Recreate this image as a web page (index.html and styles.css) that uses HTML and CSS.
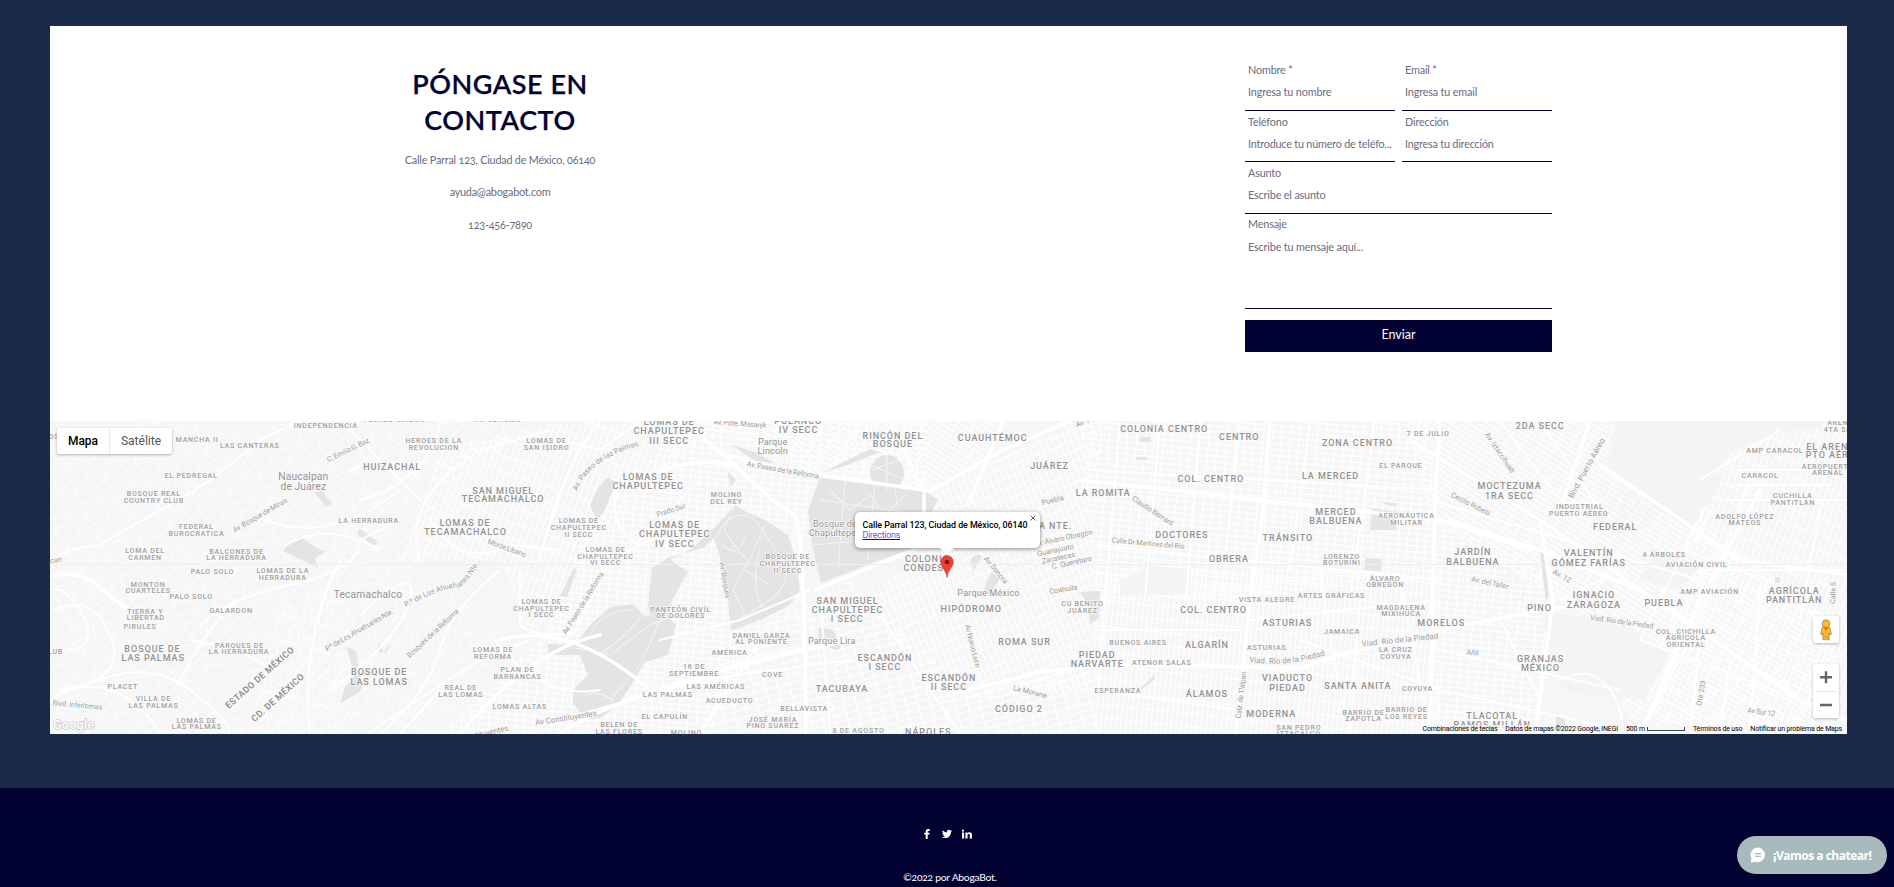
FILE: index.html
```html
<!DOCTYPE html>
<html lang="es">
<head>
<meta charset="utf-8">
<title>AbogaBot - Contacto</title>
<link rel="stylesheet" href="styles.css">
</head>
<body>
<main class="page">
  <section class="contact">
    <div class="contact-info">
      <h1 class="title">PÓNGASE EN<br>CONTACTO</h1>
      <p class="info address">Calle Parral 123, Ciudad de México, 06140</p>
      <p class="info mail">ayuda@abogabot.com</p>
      <p class="info phone">123-456-7890</p>
    </div>
    <form class="form">
      <div class="row">
        <div class="field"><span class="label">Nombre *</span><span class="hint">Ingresa tu nombre</span></div>
        <div class="field"><span class="label">Email *</span><span class="hint">Ingresa tu email</span></div>
      </div>
      <div class="row second">
        <div class="field"><span class="label">Teléfono</span><span class="hint">Introduce tu número de teléfo...</span></div>
        <div class="field"><span class="label">Dirección</span><span class="hint">Ingresa tu dirección</span></div>
      </div>
      <div class="field third"><span class="label">Asunto</span><span class="hint">Escribe el asunto</span></div>
      <div class="field message"><span class="label">Mensaje</span><span class="hint">Escribe tu mensaje aquí...</span></div>
      <button class="send" type="button">Enviar</button>
    </form>
  </section>

  <section class="map">
    <svg class="map-canvas" viewBox="50 421 1797 313" width="1797" height="313">
      <defs>
        <pattern id="g1" width="9" height="6" patternUnits="userSpaceOnUse" patternTransform="rotate(5)"><path class="st" d="M0 .5H9M.5 0V6"/></pattern>
        <pattern id="g2" width="6" height="10" patternUnits="userSpaceOnUse" patternTransform="rotate(-22)"><path class="st" d="M0 .5H6M.5 0V10"/></pattern>
        <pattern id="g3" width="14" height="5" patternUnits="userSpaceOnUse" patternTransform="rotate(32)"><path class="st" d="M0 .5H14M.5 0V5"/></pattern>
        <pattern id="g4" width="5" height="13" patternUnits="userSpaceOnUse" patternTransform="rotate(6)"><path class="st" d="M0 .5H5M.5 0V13"/></pattern>
        <pattern id="g5" width="12" height="7" patternUnits="userSpaceOnUse" patternTransform="rotate(-14)"><path class="st" d="M0 .5H12M.5 0V7"/></pattern>
        <pattern id="g6" width="6" height="15" patternUnits="userSpaceOnUse" patternTransform="rotate(20)"><path class="st" d="M0 .5H6M.5 0V15"/></pattern>
        <pattern id="w1" width="34" height="24" patternUnits="userSpaceOnUse" patternTransform="rotate(-28)"><path class="st soft" d="M0 4Q8 0 17 4T34 4M0 11Q8 16 17 11T34 11M0 18Q8 13 17 18T34 18M6 0Q10 7 6 13T6 24M25 0Q20 8 25 12T25 24"/></pattern>
        <pattern id="w2" width="22" height="26" patternUnits="userSpaceOnUse" patternTransform="rotate(14)"><path class="st soft" d="M4 0Q8 7 4 13T4 26M10 0Q15 7 10 13T10 26M17 0Q13 7 17 13T17 26M0 8H22"/></pattern>
      </defs>
      <rect class="land" x="50" y="421" width="1797" height="313"/>
      <rect fill="url(#w1)" x="50" y="421" width="300" height="313"/>
      <path fill="url(#w2)" d="M280 600L430 570L500 640L480 734H250Z"/>
      <path fill="url(#w1)" d="M350 421H520L430 560L350 600Z"/>
      <path fill="url(#g6)" d="M440 450L560 421H720L600 540L530 640L500 560L400 560Z"/>
      <path fill="url(#g1)" d="M600 500L700 421H930L925 495L815 480L800 600L700 734H440L540 640Z"/>
      <path fill="url(#g3)" d="M700 421H1003L1000 450L930 490L815 475Z"/>
      <path fill="url(#g2)" d="M930 490L1080 421H1110L1090 490L1098 690L950 700L860 600L925 550Z"/>
      <path fill="url(#g5)" d="M700 734L720 650L850 580L970 695L1100 660V734Z"/>
      <path fill="url(#g1)" d="M1080 421H1430L1440 570L1240 600H1095Z"/>
      <path fill="url(#g4)" d="M1095 570H1440V734H1095Z"/>
      <path fill="url(#g3)" d="M1405 421H1610L1700 520L1830 620L1847 734H1640L1560 600L1430 520Z"/>
      <path fill="url(#g1)" d="M1430 520L1560 570L1540 734H1430Z"/>
      <path fill="url(#g6)" d="M1700 480L1760 430L1847 421V734H1680L1640 700Z"/>

      <g class="park">
        <path d="M274 541L283 550L300 536L312 545L325 552L315 558L318 568L306 562L285 552Z"/>
        <path d="M314 492L322 491L332 504L326 506ZM360 529L378 542L374 546L357 534Z"/>
        <path d="M346 646L356 651L362 690L340 704L345 687L355 676Z"/>
        <path d="M378 642L384 652L390 641L386 653L379 652Z"/>
        <path d="M608 477L616 483L605 510L597 520L590 505L598 488Z"/>
        <path d="M574 567L577 570L567 597L560 596Z"/>
        <path d="M610 607L633 604L645 617L662 611L676 625L668 655L645 662L628 690L616 707L600 718L585 720L573 702L573 690L588 675L580 655L548 655L548 644L575 645L590 625Z"/>
        <path d="M652 568L668 558L703 548L714 538L718 550L727 590L731 631L760 620L790 605L800 590L796 560L788 535L765 520L748 513L735 505L724 518L712 530L690 550L670 560L688 572L672 600L664 650L656 651L648 605Z"/>
        <path d="M820 478L925 491L938 500L930 515L924 545L880 560L821 583L812 545L808 510Z"/>
        <ellipse cx="887" cy="473" rx="17" ry="18"/>
        <path d="M822 473L870 449L880 452L845 466ZM732 445L755 452L775 463L755 461ZM727 471L736 480L731 486Z"/>
        <path d="M819 627L833 630L841 648L835 650L818 640ZM970 562Q974 552 982 556L974 570Z"/>
        <path d="M992 572L1000 578L992 592L983 596L986 582ZM1080 592L1100 591L1099 618L1090 624L1088 605Z"/>
        <path d="M1153 577H1162V586H1153ZM1372 508L1396 512V530H1370ZM1366 558L1382 559L1381 571L1364 570ZM1140 437H1151V442H1140ZM1136 457H1147V460H1136Z"/>
        <path d="M1374 491Q1380 506 1397 506L1395 503Q1385 503 1380 500ZM1140 688L1154 676L1155 679L1142 689Z"/>
        <path d="M1540 550L1543 550L1549 594L1546 603ZM1547 615L1551 615L1548 635ZM1556 717H1565V734H1556ZM1775 577H1780V583H1775Z"/>
      </g>
      <path class="airport" d="M1617 421H1825L1820 428L1775 433L1735 450L1715 470L1722 480L1700 515L1690 530L1660 510L1605 470Z"/>
      <path class="airport" d="M1540 612L1620 622L1670 655L1645 700L1560 690ZM1655 548L1700 566L1680 590L1640 580ZM1120 580L1150 565L1190 570L1190 595H1120Z"/>

      <g class="paths">
        <path d="M716 538Q730 505 755 520Q770 540 785 565Q790 585 770 600L735 622M735 505L724 530Q740 555 748 560L733 590L745 616M765 525L745 570L770 585M722 545Q740 560 745 535M760 550Q750 580 762 608"/>
        <path d="M820 500L925 515M818 525L925 530M845 480L838 570M875 485L868 560M830 490L850 510L870 495L885 515L905 495M895 490L905 552M812 545L870 540M870 465L905 480M887 455V491M872 470L900 460"/>
        <path d="M575 648L610 655L650 625L668 618M590 635Q600 612 630 610M600 655L625 635L640 618M660 620L640 665L610 700M585 695Q600 690 612 700L610 712"/>
        <path d="M1620 505L1650 520M1622 520L1640 500M1610 508A14 14 0 1 0 1640 508A14 14 0 1 0 1610 508M1600 508A24 24 0 1 0 1648 508A24 24 0 1 0 1600 508M1624 480V540M1592 508H1660"/>
        <path d="M1478 560L1510 570Q1530 590 1520 600M1490 610L1530 650M1480 625Q1500 650 1530 640M1560 650H1640M1570 625V690"/>
      </g>
      <g class="road mid">
        <path d="M50 560Q70 547 97 546Q125 530 170 505T260 440L300 421M50 590Q70 586 85 620T50 650M50 612Q90 590 110 635T60 690M50 700Q80 680 110 690T160 734M100 680Q150 660 190 690T230 734"/>
        <path d="M200 627Q220 600 290 585T360 540L400 520M180 680Q200 640 235 600M190 640Q250 650 270 670M340 560Q300 640 310 734M285 545Q330 520 380 550M265 520Q330 545 400 490"/>
        <path d="M360 500Q430 480 440 421M420 560Q400 500 480 450L550 430M430 520Q460 570 510 545L560 550M350 470Q390 450 420 480M350 430L420 500"/>
        <path d="M380 734Q430 690 440 650T500 570M330 690Q400 640 410 600T360 615M360 740Q400 710 480 660L530 640M440 690L400 734M495 640Q540 700 600 690"/>
        <path d="M520 570V625Q540 640 575 632L610 560L650 540M600 421Q560 470 540 560M615 490Q610 530 640 545M640 540L700 480M560 440L600 450L640 421"/>
        <path d="M660 640L740 620L810 590M650 700Q720 660 850 640M700 734L760 640M560 720L700 680L850 660M820 590L830 734M870 600L960 734"/>
        <path d="M890 421L925 495M1120 421L1098 690M1160 421L1145 600M1200 421L1186 600M1090 470L1440 490M1095 545L1440 580M1240 421L1225 560M1310 421L1290 570M1375 421L1350 600M1360 600L1350 734M1320 570Q1330 650 1350 734"/>
        <path d="M1095 630H1240M1250 620L1440 600M1300 640L1440 690L1640 734M1090 690L1240 710M1400 580L1430 734M1440 650L1620 690M1500 620L1540 700M1430 500L1700 580"/>
        <path d="M1500 421L1560 500M1540 421L1600 510M1620 570L1560 600M1690 540L1640 640M1750 480L1700 620L1640 734M1700 640L1690 734M1730 660L1720 734M1760 590L1750 734M1700 570H1847M1640 640L1800 700M1780 430L1700 480M1740 470H1820M1735 485H1830M1730 500H1847M1820 510L1800 620"/>
        <path d="M1560 680Q1600 660 1618 705T1580 734M1560 503H1600M1690 538L1702 515A4 4 0 1 1 1709 512L1695 542"/>
      </g>
      <g class="road major">
        <path d="M50 576Q80 570 97 585T127 608M680 421Q720 450 745 475T795 515Q805 540 806 734M640 480Q690 455 730 465M500 640Q570 620 650 690M460 734Q530 650 600 635M560 734Q620 690 850 640"/>
        <path d="M720 452Q770 470 820 475L930 491L1003 450L1070 421M924 495V520M925 545L815 590M1270 421L1262 520L1250 600L1236 734"/>
        <path d="M950 695L1040 672L1110 664L1300 668L1340 655L1450 628L1530 612L1580 605M1003 421L970 500M1440 421L1435 500L1430 734M1410 440L1540 520L1800 700L1847 720M1600 465L1740 560L1847 575M1450 520L1540 550L1640 590"/>
        <path d="M1540 520L1553 600L1535 734M1080 480L1260 500L1440 520L1530 550M1640 734L1700 600L1760 490M1590 421L1560 510"/>
      </g>
      <path class="seam" d="M50 564.5H1847"/>

      <g class="lb lg" transform="translate(.2 3.2)">
        <text x="152.3" y="648.7">BOSQUE DE</text><text x="153" y="657.7">LAS PALMAS</text>
        <text x="392" y="467.3">HUIZACHAL</text>
        <text x="503" y="490.7">SAN MIGUEL</text><text x="503" y="499.3">TECAMACHALCO</text>
        <text x="465" y="522.7">LOMAS DE</text><text x="465.3" y="532">TECAMACHALCO</text>
        <text x="379" y="672.3">BOSQUE DE</text><text x="379" y="681.7">LAS LOMAS</text>
        <text x="669" y="422.3">LOMAS DE</text><text x="669" y="431.2">CHAPULTEPEC</text><text x="669" y="440.7">III SECC</text>
        <text x="648" y="476.7">LOMAS DE</text><text x="648" y="486">CHAPULTEPEC</text>
        <text x="674.5" y="524.7">LOMAS DE</text><text x="674.5" y="534">CHAPULTEPEC</text><text x="674.5" y="543.5">IV SECC</text>
        <text x="798" y="420.5">POLANCO</text><text x="798.3" y="429.5">IV SECC</text>
        <text x="892.7" y="435.7">RINCÓN DEL</text><text x="892.7" y="444.3">BOSQUE</text>
        <text x="992.5" y="438">CUAUHTÉMOC</text>
        <text x="927" y="558.7">COLONIA</text><text x="927" y="568">CONDESA</text>
        <text x="847.3" y="600.7">SAN MIGUEL</text><text x="847.3" y="610">CHAPULTEPEC</text><text x="847" y="619.3">I SECC</text>
        <text x="884.7" y="658">ESCANDÓN</text><text x="884.7" y="667">I SECC</text>
        <text x="948.7" y="678.3">ESCANDÓN</text><text x="948.7" y="687.3">II SECC</text>
        <text x="841.7" y="689">TACUBAYA</text><text x="928" y="731.7">NÁPOLES</text>
        <text x="971" y="609.3">HIPÓDROMO</text><text x="1164" y="429">COLONIA CENTRO</text><text x="1239" y="437.3">CENTRO</text>
        <text x="1049.3" y="466">JUÁREZ</text><text x="1210.7" y="479.3">COL. CENTRO</text><text x="1103" y="493.3">LA ROMITA</text>
        <text x="1044" y="526">ROMA NTE.</text><text x="1181.7" y="535.3">DOCTORES</text><text x="1228.7" y="559.3">OBRERA</text>
        <text x="1287.7" y="538">TRÁNSITO</text><text x="1213.3" y="610">COL. CENTRO</text><text x="1024.3" y="642.3">ROMA SUR</text>
        <text x="1206.7" y="645.3">ALGARÍN</text><text x="1097" y="655">PIEDAD</text><text x="1097" y="664.3">NARVARTE</text>
        <text x="1206.7" y="693.7">ÁLAMOS</text><text x="1018.7" y="709.3">CÓDIGO 2</text><text x="1287" y="622.7">ASTURIAS</text>
        <text x="1287.3" y="678.3">VIADUCTO</text><text x="1287.3" y="687.7">PIEDAD</text><text x="1271" y="714.3">MODERNA</text>
        <text x="1540" y="426">2DA SECC</text><text x="1357.3" y="443.3">ZONA CENTRO</text><text x="1330.3" y="476">LA MERCED</text>
        <text x="1335.7" y="512">MERCED</text><text x="1335.7" y="521.3">BALBUENA</text><text x="1441" y="623.3">MORELOS</text>
        <text x="1357.7" y="685.7">SANTA ANITA</text><text x="1492" y="715.7">TLACOTAL</text><text x="1492" y="724.6">RAMOS MILLÁN</text>
        <text x="1540.3" y="659">GRANJAS</text><text x="1540.3" y="668.3">MÉXICO</text><text x="1539.3" y="608">PINO</text>
        <text x="1472.7" y="552.3">JARDÍN</text><text x="1472.7" y="561.5">BALBUENA</text>
        <text x="1509.3" y="486">MOCTEZUMA</text><text x="1509.3" y="495.5">1RA SECC</text><text x="1615" y="526.7">FEDERAL</text>
        <text x="1588.5" y="553.3">VALENTÍN</text><text x="1588.5" y="562.7">GÓMEZ FARÍAS</text>
        <text x="1593.7" y="595.3">IGNACIO</text><text x="1593.7" y="604.7">ZARAGOZA</text><text x="1663.7" y="602.7">PUEBLA</text>
        <text x="1794" y="590.7">AGRÍCOLA</text><text x="1794" y="599.7">PANTITLÁN</text>
        <text x="1833.5" y="446.7">EL ARENAL</text><text x="1833.5" y="455">PTO AÉREO</text>
      </g>
      <g class="lb sm" transform="translate(.8 2.6)">
        <text x="325" y="425.7">INDEPENDENCIA</text><text x="190" y="439">LA MANCHA II</text><text x="249" y="445">LAS CANTERAS</text>
        <text x="51" y="436.5">LOS</text>
        <text x="190.3" y="475">EL PEDREGAL</text><text x="153" y="493.3">BOSQUE REAL</text><text x="153" y="500">COUNTRY CLUB</text>
        <text x="368" y="520.6">LA HERRADURA</text><text x="195.7" y="526.7">FEDERAL</text><text x="195.7" y="533.3">BUROCRATICA</text>
        <text x="144.3" y="550.7">LOMA DEL</text><text x="144.3" y="557.3">CARMEN</text><text x="235.7" y="551.5">BALCONES DE</text><text x="235.7" y="557.9">LA HERRADURA</text>
        <text x="211.7" y="571.3">PALO SOLO</text><text x="282" y="570.7">LOMAS DE LA</text><text x="282" y="577.3">HERRADURA</text>
        <text x="147.3" y="584">MONTON</text><text x="147.3" y="590.7">CUARTELES</text><text x="190.3" y="596.7">PALO SOLO</text>
        <text x="144.5" y="611.3">TIERRA Y</text><text x="145" y="617.7">LIBERTAD</text><text x="139.3" y="626.3">PIRULES</text><text x="230.3" y="610">GALARDON</text>
        <text x="52" y="651">CLUB</text><text x="238.7" y="645.3">PARQUES DE</text><text x="238.3" y="651.7">LA HERRADURA</text>
        <text x="122" y="686.3">PLACET</text><text x="152.7" y="698.3">VILLA DE</text><text x="152.7" y="705">LAS PALMAS</text>
        <text x="195.7" y="720">LOMAS DE</text><text x="196" y="726.7">LAS PALMAS</text>
        <text x="394" y="419.2">FLORES MAGON</text><text x="497" y="419.2">HIPODROMO</text>
        <text x="433" y="440.7">HEROES DE LA</text><text x="433" y="447">REVOLUCION</text><text x="545.7" y="440.7">LOMAS DE</text><text x="545.7" y="447">SAN ISIDRO</text>
        <text x="578" y="520.7">LOMAS DE</text><text x="578" y="527.3">CHAPULTEPEC</text><text x="578" y="534">II SECC</text>
        <text x="604.7" y="549.3">LOMAS DE</text><text x="604.7" y="556">CHAPULTEPEC</text><text x="604.7" y="562.7">VI SECC</text>
        <text x="540.7" y="601.3">LOMAS DE</text><text x="540.7" y="608">CHAPULTEPEC</text><text x="540.7" y="614.7">I SECC</text>
        <text x="492.3" y="649.7">LOMAS DE</text><text x="492.3" y="656.3">REFORMA</text><text x="516.7" y="669.7">PLAN DE</text><text x="516.7" y="676.3">BARRANCAS</text>
        <text x="460" y="687.7">REAL DE</text><text x="460" y="694.3">LAS LOMAS</text><text x="519" y="706">LOMAS ALTAS</text>
        <text x="618.3" y="724.7">BELEN DE</text><text x="618.3" y="731.3">LAS FLORES</text>
        <text x="680" y="609">PANTEÓN CIVÍL</text><text x="680" y="615.7">DE DOLORES</text><text x="725.7" y="494.7">MOLINO</text><text x="725.7" y="501">DEL REY</text>
        <text x="787" y="556.7">BOSQUE DE</text><text x="787" y="563.3">CHAPULTEPEC</text><text x="787" y="570">II SECC</text>
        <text x="760.7" y="635">DANIEL GARZA</text><text x="760.7" y="641.5">AL PONIENTE</text><text x="728.7" y="652.3">AMÉRICA</text>
        <text x="693.3" y="666.3">16 DE</text><text x="693.3" y="673">SEPTIEMBRE</text><text x="771.7" y="674">COVE</text><text x="715" y="686.3">LAS AMÉRICAS</text>
        <text x="667" y="694.7">LAS PALMAS</text><text x="728.7" y="700.7">ACUEDUCTO</text><text x="664" y="716">EL CAPULÍN</text><text x="685.7" y="732.3">MOLINO</text>
        <text x="803.3" y="708.7">BELLAVISTA</text><text x="772" y="719.3">JOSÉ MARÍA</text><text x="772" y="725.7">PINO SUÁREZ</text><text x="857.7" y="730">8 DE AGOSTO</text>
        <text x="1081.7" y="603.7">CU BENITO</text><text x="1081.7" y="610.5">JUÁREZ</text><text x="1137.3" y="642.3">BUENOS AIRES</text><text x="1161" y="662.3">ATENOR SALAS</text>
        <text x="1117" y="690">ESPERANZA</text><text x="1266" y="599">VISTA ALEGRE</text><text x="1266" y="647.7">ASTURIAS</text><text x="1298" y="727.3">SAN PEDRO</text><text x="1298" y="733.5">IZTACALCO</text>
        <text x="1427.3" y="433">7 DE JULIO</text><text x="1400" y="465">EL PARQUE</text><text x="1405.7" y="515.7">AERONÁUTICA</text><text x="1405.7" y="522.5">MILITAR</text>
        <text x="1341" y="556">LORENZO</text><text x="1341" y="562.5">BOTURINI</text><text x="1384.3" y="578">ÁLVARO</text><text x="1384.3" y="584.5">OBREGÓN</text>
        <text x="1330.7" y="595.7">ARTES GRÁFICAS</text><text x="1400.3" y="607.3">MAGDALENA</text><text x="1400.3" y="613.7">MIXIHUCA</text><text x="1341.3" y="631.7">JAMAICA</text>
        <text x="1395" y="649.7">LA CRUZ</text><text x="1395" y="656.5">COYUYA</text><text x="1416.7" y="688">COYUYA</text>
        <text x="1362.7" y="712">BARRIO DE</text><text x="1362.7" y="718.7">ZAPOTLA</text><text x="1405.7" y="709.7">BARRIO DE</text><text x="1405.7" y="716">LOS REYES</text>
        <text x="1579" y="506.7">INDUSTRIAL</text><text x="1578" y="513.3">PUERTO AÉREO</text><text x="1663.3" y="554">4 ÁRBOLES</text><text x="1695.7" y="564.7">AVIACIÓN CIVIL</text>
        <text x="1709" y="591">AMP AVIACIÓN</text><text x="1685" y="631">COL. CUCHILLA</text><text x="1685" y="637.7">AGRÍCOLA</text><text x="1685" y="644.5">ORIENTAL</text>
        <text x="1842" y="422.7">ARENAL</text><text x="1842" y="429">4TA SECC</text><text x="1774" y="450.3">AMP CARACOL</text><text x="1827" y="466">AEROPUERTO</text><text x="1827" y="472.3">ARENAL</text>
        <text x="1759.3" y="475.7">CARACOL</text><text x="1792" y="495.3">CUCHILLA</text><text x="1792" y="502">PANTITLÁN</text><text x="1744" y="516">ADOLFO LÓPEZ</text><text x="1744" y="522.7">MATEOS</text>
      </g>
      <g class="lb town" transform="translate(0 3.6)">
        <text x="303.3" y="476">Naucalpan</text><text x="303.3" y="486.7">de Juárez</text><text x="368" y="594">Tecamachalco</text>
      </g>
      <g class="lb green" transform="translate(0 3.2)">
        <text x="772.7" y="441.7">Parque</text><text x="772.7" y="450.7">Lincoln</text><text x="835" y="523.7">Bosque de</text><text x="835" y="532.7">Chapultepec</text>
        <text x="831.7" y="641.3">Parque Lira</text><text x="988.5" y="593.3">Parque México</text>
      </g>
      <g class="lb way">
        <text class="border" transform="translate(259.3 677.3) rotate(-41.5)" y="3.5" textLength="88">ESTADO DE MÉXICO</text>
        <text class="border" transform="translate(277.3 697.3) rotate(-41.7)" y="3.5" textLength="67">CD. DE MÉXICO</text>
        <text transform="translate(260 515) rotate(-30)" y="2.5" textLength="62">Av. Bosque de Minas</text>
        <text transform="translate(348 450) rotate(-26)" y="2.5" textLength="46">C. Emilio G. Baz</text>
        <text transform="translate(359 630) rotate(-30)" y="2.5" textLength="77">P.º de Los Ahuehuetes Nte.</text>
        <text transform="translate(77.5 705) rotate(5)" y="2.5" textLength="50">Blvd. Interlomas</text>
        <text transform="translate(41 562) rotate(-8)" y="2.5">Huixquilucan</text>
        <text transform="translate(507 548) rotate(20)" y="2.5" textLength="40">Monte Líbano</text>
        <text transform="translate(432.7 633.3) rotate(-43)" y="2.5" textLength="68">Bosques de la Reforma</text>
        <text transform="translate(583 603) rotate(-58)" y="2.5" textLength="72">Av. Paseo de la Reforma</text>
        <text class="wide" transform="translate(566 718) rotate(-9)" y="2.5" textLength="62">Av Constituyentes</text>
        <text class="wide" transform="translate(478 735) rotate(-13)" y="2.5" textLength="62">Av Constituyentes</text>
        <text transform="translate(671 510) rotate(-18)" y="2.5" textLength="30">Prado Sur</text>
        <text transform="translate(740 423.5) rotate(4)" y="2.5" textLength="53">Av. Pdte. Masaryk</text>
        <text transform="translate(783 470) rotate(10)" y="2.5" textLength="73">Av. Paseo de la Reforma</text>
        <text transform="translate(725 580) rotate(80)" y="2.5" textLength="36">Av. Bosques</text>
        <text transform="translate(1052.7 500) rotate(-14)" y="2.5">Puebla</text>
        <text transform="translate(1152.7 510.7) rotate(33)" y="2.5" textLength="48">Claudio Bernard</text>
        <text transform="translate(1063 538) rotate(-12)" y="2.5" textLength="60">Av. Álvaro Obregón</text>
        <text transform="translate(1055.3 550) rotate(-12)" y="2.5">Guanajuato</text>
        <text transform="translate(1058.3 557.7) rotate(-12)" y="2.5">Zacatecas</text>
        <text transform="translate(1071.7 562.3) rotate(-12)" y="2.5">C. Querétaro</text>
        <text transform="translate(1148 543.3) rotate(5)" y="2.5" textLength="73">Calle Dr Martínez del Río</text>
        <text transform="translate(996 570) rotate(50)" y="2.5">Av Sonora</text>
        <text transform="translate(1063.3 589.3) rotate(-9)" y="2.5">Coahuila</text>
        <text transform="translate(972.7 646) rotate(76)" y="2.5" textLength="44">Av Nuevo León</text>
        <text transform="translate(1030 691.7) rotate(14)" y="2.5">La Morena</text>
        <text transform="translate(1092 419) rotate(-20)" y="2.5">Av. Puente</text>
        <text transform="translate(1241 695) rotate(-83)" y="2.5" textLength="47">Calz. de Tlalpan</text>
        <text class="wide" transform="translate(1400 640) rotate(-6)" y="2.5" textLength="77">Viad. Río de la Piedad</text>
        <text transform="translate(1472.7 652.5) rotate(5)" y="2.5">Añil</text>
        <text transform="translate(1500 452.7) rotate(56)" y="2.5" textLength="47">Av. Iztaccíhuatl</text>
        <text transform="translate(1470.7 504) rotate(27)" y="2.5" textLength="43">Cecilio Robelo</text>
        <text transform="translate(1490 582.7) rotate(12)" y="2.5" textLength="38">Av. del Taller</text>
        <text class="wide" transform="translate(1586.7 468.3) rotate(-61)" y="2.5" textLength="67">Blvd. Puerto Aéreo</text>
        <text transform="translate(1562 576) rotate(30)" y="2.5">Av. 12</text>
        <text transform="translate(1833 593) rotate(-88)" y="2.5">Calle 5</text>
        <text transform="translate(1621.7 621.7) rotate(8)" y="2.5" textLength="64">Viad. Río de la Piedad</text>
        <text transform="translate(1701 693) rotate(-80)" y="2.5">Ote 233</text>
        <text transform="translate(1761.3 712) rotate(8)" y="2.5" textLength="28">Av Sur 12</text>
        <path id="palmas" fill="none" d="M577 491Q588 462 631 448L650 442"/>
        <text class="bend"><textPath href="#palmas">Av. Paseo de las Palmas</textPath></text>
        <path id="ahue" fill="none" d="M406 607Q440 588 460 587Q468 582 484 555"/>
        <text class="bend"><textPath href="#ahue">P.º de Los Ahuehuetes Nte...</textPath></text>
        <path id="viad" fill="none" d="M1249 662Q1290 668 1332 653"/>
        <text class="bend wide"><textPath href="#viad">Viad. Río de la Piedad</textPath></text>
      </g>
      <text class="google" x="53" y="729">Google</text>
      <path class="pin" d="M947 577.5C946.4 570 940.7 567.5 940.7 561.8A6.3 6.3 0 0 1 953.3 561.8C953.3 567.5 947.6 570 947 577.5Z"/>
      <circle class="pin-dot" cx="947" cy="562" r="2.3"/>
    </svg>

    <div class="map-type"><span class="type active">Mapa</span><span class="type">Satélite</span></div>
    <div class="bubble">
      <b class="bubble-title">Calle Parral 123, Ciudad de México, 06140</b>
      <a class="bubble-link">Directions</a>
      <svg class="close" viewBox="0 0 8 8" width="8" height="8"><path d="M1.5 1.5L6.5 6.5M6.5 1.5L1.5 6.5"/></svg>
    </div>
    <div class="tools">
      <div class="tool pegman">
        <svg viewBox="0 0 14 22" width="14" height="22"><path class="peg-body" d="M3.2 8.5H10.8L12.4 15L10.8 15.8L10.2 14V20.8H7.7V17H6.3V20.8H3.8V14L3.2 15.8L1.6 15Z"/><circle class="peg-body" cx="7" cy="4.7" r="3.9"/><path class="peg-neck" d="M4.5 8.5H9.5L7 12Z"/></svg>
      </div>
      <div class="tool zoom">
        <svg viewBox="0 0 26 54" width="26" height="54"><path class="sign" d="M7 13.2H19M13 7.2V19.2M7 41H19"/><path class="rule" d="M3 27.5H23"/></svg>
      </div>
    </div>
    <div class="credits">
      <span>Combinaciones de teclas</span><span>Datos de mapas ©2022 Google, INEGI</span><span class="ruler">500 m<i class="scale"></i></span><span>Términos de uso</span><span>Notificar un problema de Maps</span>
    </div>
  </section>
</main>

<footer class="footer">
  <div class="social">
    <svg viewBox="0 0 10 10" width="10" height="10"><path d="M3.7 10V5.6H2.2V3.8H3.7V2.6C3.7 1 4.6.1 6.1.1H7.7V1.9H6.7C6 1.9 5.7 2.2 5.7 2.8V3.8H7.6L7.4 5.6H5.7V10Z"/></svg>
    <svg viewBox="0 0 10 10" width="10" height="10"><path d="M10 1.9L9 2.9C9 6.5 6.5 9.1 3.2 9.1C2 9.1.9 8.8 0 8.2C1.1 8.3 2.2 8 3 7.4C2.1 7.4 1.4 6.8 1.1 6H2C1 5.7.4 4.9.4 3.9L1.3 4.1C.4 3.5.1 2.3.7 1.3C1.7 2.5 3.2 3.3 4.9 3.4C4.6 1.9 5.7.8 6.9.8C7.5.8 8.1 1 8.5 1.4L9.8.9L8.9 2.1Z"/></svg>
    <svg viewBox="0 0 10 10" width="10" height="10"><path d="M0 3.4H2.1V9.6H0ZM1 .5A1.1 1.1 0 1 1 1 2.7A1.1 1.1 0 1 1 1 .5M3.4 3.4H5.4V4.3C5.8 3.6 6.5 3.2 7.4 3.2C9.4 3.2 9.9 4.5 9.9 6.2V9.6H7.8V6.6C7.8 5.8 7.7 5 6.7 5C5.7 5 5.5 5.7 5.5 6.5V9.6H3.4Z"/></svg>
  </div>
  <p class="copy">©2022 por AbogaBot.</p>
</footer>

<div class="chat">
  <svg viewBox="0 0 16 16" width="16" height="16"><path class="balloon" d="M8 .6A7.3 7.3 0 1 1 5 14.7L.6 15.6L1.5 11.5A7.3 7.3 0 0 1 8 .6Z"/><path class="lines" d="M5 6.7H11M5 9.3H11"/></svg>
  <span>¡Vamos a chatear!</span>
</div>
</body>
</html>
```
FILE: styles.css
```css
* { box-sizing: border-box; }
html, body { height: 100%; }
body {
  margin: 0;
  height: 887px;
  overflow: hidden;
  display: flex;
  flex-direction: column;
  background: #1b2a49;
  font-family: Lato, "Open Sans", sans-serif;
  color: #030333;
}
.page { padding: 26px 47px 54px 50px; }

.contact {
  height: 395px;
  background: #fff;
  display: flex;
  justify-content: space-between;
  padding: 35px 295px 0 350px;
}
.contact-info { width: 200px; text-align: center; padding-top: 5px; }
.title {
  margin: 0;
  font-size: 27px;
  line-height: 36px;
  font-weight: 600;
  letter-spacing: .55px;
  white-space: nowrap;
  -webkit-text-stroke: .25px #030333;
}
.info {
  margin: 0;
  font-size: 10.8px;
  line-height: 16px;
  letter-spacing: -.2px;
  color: #6a6a82;
  font-feature-settings: "onum";
}
.address { margin-top: 14px; white-space: nowrap; }
.mail { margin-top: 16px; }
.phone { margin-top: 17px; }

.form { width: 307px; color: #6a6a82; }
.row { display: grid; grid-template-columns: 150px 150px; gap: 7px; }
.field {
  display: flex;
  flex-direction: column;
  border-bottom: 1px solid #030333;
  height: 50px;
  padding-left: 3px;
  font-size: 10.8px;
  letter-spacing: -.15px;
  white-space: nowrap;
}
.row.second .field { height: 51px; }
.row.second .hint { letter-spacing: -.19px; }
.field.third { height: 52px; }
.label { line-height: 18px; }
.hint { line-height: 26px; }
.second .label, .third .label { line-height: 22px; }
.second .hint, .third .hint { line-height: 22px; }
.field.message { height: 95px; }
.message .label { line-height: 20px; }
.message .hint { line-height: 25px; }
.send {
  display: block;
  width: 100%;
  height: 32px;
  margin-top: 11px;
  padding: 0 0 3px;
  border: 0;
  background: #030333;
  color: #fff;
  font: 400 12.5px Lato, sans-serif;
}

.map { position: relative; height: 313px; overflow: hidden; font-family: Roboto, sans-serif; }
.map-canvas { display: block; }
.land { fill: #f6f6f6; }
.st { stroke: #fff; stroke-width: 1; fill: none; }
.st.soft { opacity: .7; }
.park { fill: #e4e4e4; }
.airport { fill: #f4f4f4; }
.paths { fill: none; stroke: #f3f3f3; stroke-width: 1.1; }
.road { fill: none; stroke: #fff; stroke-linecap: round; stroke-linejoin: round; }
.mid { stroke-width: 2; }
.major { stroke-width: 3.6; }
.seam { stroke: #efefef; }
.lb { text-anchor: middle; fill: #949494; stroke: #fafafa; stroke-width: 1.4; paint-order: stroke; stroke-linejoin: round; }
.lg { font-size: 9px; font-weight: 500; letter-spacing: .95px; fill: #919191; }
.sm { font-size: 7.1px; font-weight: 500; letter-spacing: .75px; fill: #9e9e9e; }
.town { font-size: 10.3px; letter-spacing: .1px; }
.green { font-size: 9px; letter-spacing: .2px; }
.way { font-size: 7.3px; fill: #9a9a9a; }
.way path { stroke: none; }
.wide { font-size: 8px; }
.border { font-size: 9px; font-weight: 500; fill: #868686; }
.bend { text-anchor: start; }
.google { font-size: 13px; font-weight: 500; fill: #fff; stroke: #c9c9c9; stroke-width: 1.4; paint-order: stroke; }
.pin { fill: #ea4335; stroke: #d23a2e; stroke-width: .6; }
.pin-dot { fill: #7c1510; }

.map-type {
  position: absolute;
  left: 7px;
  top: 7px;
  display: flex;
  height: 26px;
  background: #fff;
  border-radius: 2px;
  box-shadow: 0 1px 3px rgba(0, 0, 0, .28);
  font-size: 12px;
  line-height: 26px;
  color: #565656;
}
.type { width: 62px; text-align: center; }
.type.active { width: 53px; color: #000; font-weight: 500; border-right: 1px solid #e9e9e9; }

.bubble {
  position: absolute;
  left: 805px;
  top: 91px;
  width: 185px;
  height: 36px;
  padding: 8px 7.5px;
  background: #fff;
  border-radius: 5px;
  box-shadow: 0 1px 4px rgba(0, 0, 0, .45);
  font-size: 8.9px;
  line-height: 10px;
  white-space: nowrap;
}
.bubble::after {
  content: "";
  position: absolute;
  left: 85px;
  top: 36px;
  border: 7px solid transparent;
  border-top-color: #fff;
  border-bottom: 0;
}
.bubble-title { display: block; font-weight: 500; letter-spacing: -.06px; color: #000; }
.bubble-link { display: block; width: max-content; letter-spacing: -.15px; color: #0000ee; text-decoration: underline; font-weight: 300; }
.close { position: absolute; right: 3px; top: 2px; stroke: #555; stroke-width: .9; }

.tools { position: absolute; right: 8px; top: 195px; display: flex; flex-direction: column; gap: 21px; }
.tool { width: 26px; background: #fff; border-radius: 2px; box-shadow: 0 1px 3px rgba(0, 0, 0, .28); }
.tool svg { display: block; }
.pegman { height: 27px; padding: 3px 0 0 6px; }
.zoom { height: 54px; }
.peg-body { fill: #fbbc2b; stroke: #8f7440; stroke-width: .6; }
.peg-neck { fill: #e8710a; }
.sign { stroke: #666; stroke-width: 2.4; }
.rule { stroke: #e6e6e6; }

.credits {
  position: absolute;
  right: 0;
  bottom: 0;
  height: 9px;
  padding-right: 5px;
  display: flex;
  gap: 8px;
  background: rgba(245, 245, 245, .75);
  font-size: 7px;
  letter-spacing: -.16px;
  line-height: 9px;
  color: #000;
  white-space: nowrap;
}
.ruler { display: flex; gap: 2px; }
.scale { width: 38px; height: 4px; margin-top: 2px; border: 1px solid #444; border-top: 0; }

.footer { flex: 1; background: #030333; display: flex; flex-direction: column; align-items: center; padding-top: 41px; }
.social { display: flex; gap: 10px; fill: #fff; }
.copy { margin: 30px 0 0; font-size: 10.3px; letter-spacing: -.25px; line-height: 16px; color: #fff; padding-left: 6px; font-feature-settings: "onum"; white-space: nowrap; }

.chat {
  position: absolute;
  left: 1737px;
  top: 836px;
  width: 150px;
  height: 38px;
  border-radius: 19px;
  background: #a9babd;
  display: flex;
  align-items: center;
  gap: 7px;
  padding-left: 13px;
  color: #fff;
  font: 700 12px "Open Sans", sans-serif;
  letter-spacing: -.5px;
  white-space: nowrap;
}
.balloon { fill: #fff; }
.lines { stroke: #a9babd; stroke-width: 1.2; }
```
